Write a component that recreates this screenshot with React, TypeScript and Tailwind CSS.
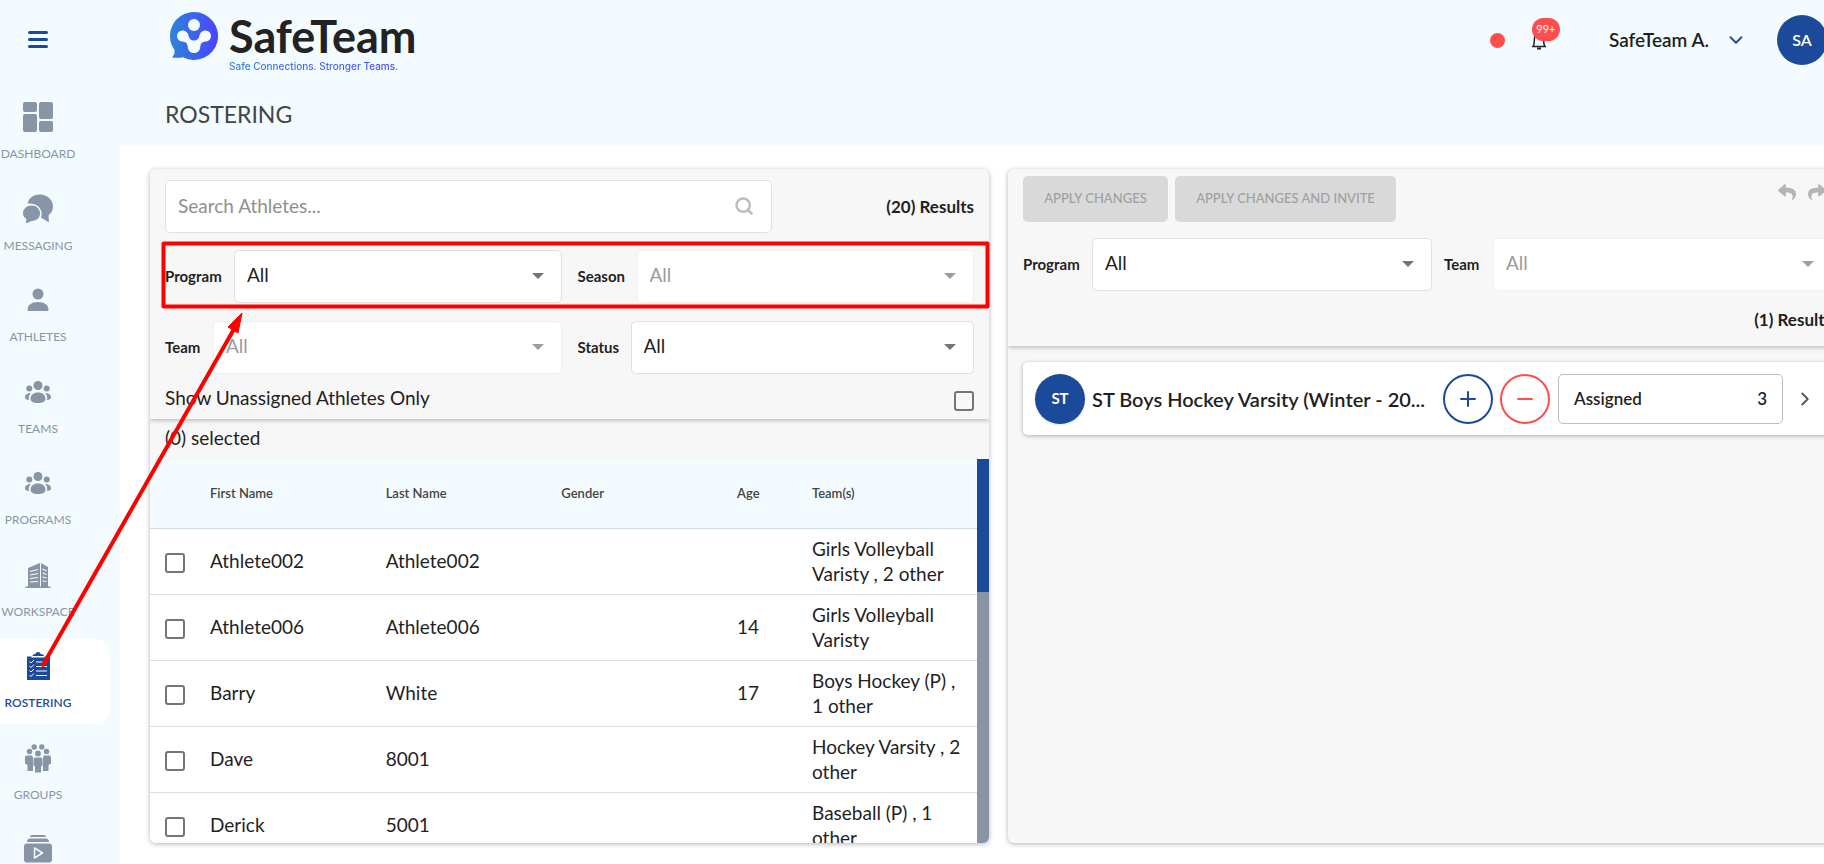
import { useId } from "react";
import type { ReactNode } from "react";
import { FaReply, FaShare } from "react-icons/fa";
import { ChevronDown, ChevronRight, Minus, Plus, Search } from "lucide-react";

type NavItem = {
  label?: string;
  icon: ReactNode;
  active?: boolean;
};

const DashboardIcon = () => (
  <svg className="h-[30px] w-[30px]" viewBox="0 0 30 30" fill="currentColor">
    <rect x="0" y="0" width="14" height="10" rx="2" />
    <rect x="0" y="12" width="14" height="18" rx="2" />
    <rect x="16" y="0" width="14" height="17" rx="2" />
    <rect x="16" y="19" width="14" height="11" rx="2" />
  </svg>
);

const MessagingIcon = () => (
  <svg className="h-[30px] w-[30px]" viewBox="0 0 30 30" fill="currentColor">
    <path d="M4.500 9.500C6 3.500 11 .5 17 .5c7 0 13 5 13 12 0 4-2 7-4.500 9 0 2 .2 3.500 .5 5.500 0 .8-.5 1.200-1.200 .8L18 23.500c2-5-.5-11-6-13-2.500-1-5-1.200-7.500-1z" />
    <path d="M8.500 11.500c5 0 8.500 3.300 8.500 8 0 4.600-3.800 7.500-8.500 7.500L4 29c-.8 .4-1.200 0-1-.8l.4-3.200C1.200 23.500 0 21.500 0 19.500c0-4.700 3.800-8 8.500-8z" />
  </svg>
);

const AthleteIcon = () => (
  <svg className="h-[30px] w-[30px]" viewBox="0 0 30 30" fill="currentColor">
    <circle cx="15" cy="9" r="5.5" />
    <path d="M4.500 25c0-5 4-8 10.500-8s10.500 3 10.500 8c0 .8-.5 1-1 1H5.500c-.6 0-1-.3-1-1z" />
  </svg>
);

const TeamIcon = () => (
  <svg className="h-[30px] w-[30px]" viewBox="0 0 30 30" fill="currentColor">
    <circle cx="15" cy="8.500" r="4.500" />
    <circle cx="6.300" cy="11.500" r="3" />
    <circle cx="23.700" cy="11.500" r="3" />
    <path d="M7.500 22c0-4 3-6.500 7.500-6.500s7.500 2.500 7.500 6.500c0 2.500-3 4-7.500 4s-7.500-1.500-7.500-4z" />
    <path d="M7.800 16c-1.800 2-2.500 4-1.800 7-2.500 0-4-1-4-2.500 0-3 2.300-4.500 5.800-4.500zM22.200 16c1.800 2 2.500 4 1.800 7 2.500 0 4-1 4-2.500 0-3-2.300-4.500-5.800-4.500z" />
  </svg>
);

const WorkspaceIcon = () => (
  <svg className="h-[30px] w-[30px]" viewBox="0 0 30 30" fill="currentColor">
    <path d="M5 8l12-5v24H5zM18 3l7 4v20h-7zM2.500 26.500h25V28h-25z" />
    <path
      d="M7 11.500l8-2M7 15l8-1.500M7 18.500l8-1M7 22l8-.5M19.500 9l4 2M19.500 13l4 1.500M19.500 17l4 1M19.500 21l4 .5"
      stroke="#f3fbff"
      strokeWidth="1.200"
    />
  </svg>
);

const RosterIcon = () => (
  <svg className="h-[30px] w-[30px]" viewBox="0 0 30 30" fill="currentColor">
    <path d="M4 5.500h4.500v1h13v-1H27V29H4z" />
    <path d="M9.500 5c0-1.300 1-1.800 3-2C12.500 1.800 13.500 1 15 1s2.500 .8 2.500 2c2 .2 3.500 .7 3.500 2z" />
    <path
      d="M6.500 10.500l1.500 1.500 3-3M6.500 15l1.500 1.500 3-3M6.500 19.500l1.500 1.500 3-3M6.500 24l1.500 1.500 3-3M13 11h11M13 15.500h11M13 20h11M13 24.500h11"
      stroke="#fff"
      fill="none"
    />
  </svg>
);

const GroupIcon = () => (
  <svg className="h-[30px] w-[30px]" viewBox="0 0 30 30" fill="currentColor">
    <circle cx="11.200" cy="4" r="2.700" />
    <circle cx="18.800" cy="4" r="2.700" />
    <circle cx="6.500" cy="8.500" r="2.700" />
    <circle cx="23.500" cy="8.500" r="2.700" />
    <circle cx="15" cy="10.500" r="2.900" />
    <path d="M4 12.500h5l1 2V28H4.500v-6L2 20.500v-5c0-2 .5-3 2-3zM26 12.500h-5l-1 2V28h5.500v-6l2.500-1.500v-5c0-2-.5-3-2-3z" />
    <path d="M12.500 14.500h5c1.500 0 2 1 2 2.500v5.500L18 23.500v6h-6v-6l-1.500-1V17c0-1.500 .5-2.500 2-2.500z" />
  </svg>
);

const LibraryIcon = () => (
  <svg className="h-[30px] w-[30px]" viewBox="0 0 30 30" fill="currentColor">
    <path d="M7 3c0-1.300 1-2 2-2h12c1 0 2 .7 2 2zM4 8c0-2 1-3.500 3-3.500h16c2 0 3 1.500 3 3.500z" />
    <rect x="1" y="9.500" width="28" height="19" rx="3" />
    <path d="M11.500 14v10l8-5z" fill="none" stroke="#f3fbff" strokeWidth="1.500" strokeLinejoin="round" />
  </svg>
);

const navItems: NavItem[] = [
  { label: "DASHBOARD", icon: <DashboardIcon /> },
  { label: "MESSAGING", icon: <MessagingIcon /> },
  { label: "ATHLETES", icon: <AthleteIcon /> },
  { label: "TEAMS", icon: <TeamIcon /> },
  { label: "PROGRAMS", icon: <TeamIcon /> },
  { label: "WORKSPACE", icon: <WorkspaceIcon /> },
  { label: "ROSTERING", icon: <RosterIcon />, active: true },
  { label: "GROUPS", icon: <GroupIcon /> },
  { icon: <LibraryIcon /> },
];

const athletes = [
  { first: "Athlete002", last: "Athlete002", age: "", teams: "Girls Volleyball Varisty , 2 other" },
  { first: "Athlete006", last: "Athlete006", age: "14", teams: "Girls Volleyball Varisty" },
  { first: "Barry", last: "White", age: "17", teams: "Boys Hockey (P) , 1 other" },
  { first: "Dave", last: "8001", age: "", teams: "Hockey Varsity , 2 other" },
  { first: "Derick", last: "5001", age: "", teams: "Baseball (P) , 1 other" },
];

const checkboxClass =
  "block h-5 w-5 shrink-0 appearance-none rounded-[3px] border-2 border-[#757575] bg-transparent checked:bg-[#1b4a9a]";

type SelectFieldProps = {
  label: string;
  labelClass: string;
  disabled?: boolean;
};

const SelectField = ({ label, labelClass, disabled }: SelectFieldProps) => {
  const id = useId();

  return (
    <div className="flex min-w-0 flex-1 items-center">
      <label htmlFor={id} className={`shrink-0 text-[15px] font-bold ${labelClass}`}>
        {label}
      </label>
      <div className="relative min-w-0 flex-1">
        <select
          id={id}
          disabled={disabled}
          className="block h-[53px] w-full appearance-none rounded-[5px] border border-[#e0e0e0] bg-white px-3 pb-0.5 text-[19px] disabled:border-[#f0f0f0] disabled:text-[#9b9b9b] disabled:opacity-100"
        >
          <option>All</option>
        </select>
        <svg
          className={`pointer-events-none absolute top-[23px] right-[18px] h-1.5 w-3 ${disabled ? "text-[#9e9e9e]" : "text-[#757575]"}`}
          viewBox="0 0 12 6"
          fill="currentColor"
        >
          <path d="M0 0h12L6 6z" />
        </svg>
      </div>
    </div>
  );
};

const Logo = () => (
  <div className="flex gap-[11px]">
    <svg className="mt-3 h-12 w-12" viewBox="0 0 48 48">
      <defs>
        <linearGradient id="logo-mark" x1="0" x2="1">
          <stop offset="0.1" stopColor="#2f7fdb" />
          <stop offset="1" stopColor="#4a44ff" />
        </linearGradient>
      </defs>
      <path
        fill="url(#logo-mark)"
        d="M24 0a24 24 0 1 1-11 45.300C9.500 46 6 46 2 45.500c2-2 3-5 2.500-7.500A24 24 0 0 1 24 0z"
      />
      <circle cx="24" cy="13" r="6" fill="#f3fbff" />
      <path
        fill="#f3fbff"
        d="M12.500 18.500c3.500 0 5.500 2.500 6 5 .5 3.500 2.500 5 5.500 5s5-1.500 5.500-5c.5-2.500 2.500-5 6-5a5.500 5.500 0 0 1 0 11c-3.500 .3-5 2-5.200 5-.3 4-2.300 6.500-6.300 6.500s-6-2.500-6.300-6.500c-.2-3-1.700-4.700-5.200-5a5.500 5.500 0 0 1 0-11z"
      />
    </svg>
    <div className="pt-3">
      <p className="text-[45px] leading-[48px] font-bold text-[#222]">SafeTeam</p>
      <p className="w-fit bg-gradient-to-r from-[#2f7fdb] to-[#4a44ff] bg-clip-text font-[Inter] text-[10px] leading-3 font-medium text-transparent">
        Safe Connections. Stronger Teams.
      </p>
    </div>
  </div>
);

const Header = () => (
  <header className="flex h-[146px] flex-col">
    <div className="flex h-20 items-start justify-between pl-[50px]">
      <Logo />
      <div className="-mr-[3px] flex h-20 shrink-0 items-center">
        <span className="mr-[26px] h-[15px] w-[15px] rounded-full bg-[#ff4d4d]" />
        <button type="button" aria-label="Notifications" className="relative mr-[62px]">
          <svg className="h-5 w-4" viewBox="0 0 16 20" fill="none" stroke="#222" strokeWidth="1.500">
            <path d="M1 16.500h14M2.500 16c1-3 .8-5 1-8C3.700 5 5.300 3 8 3s4.300 2 4.500 5c.2 3 0 5 1 8" />
            <path d="M6 18.500h4" strokeWidth="2" />
          </svg>
          <span className="absolute -top-3 left-px flex h-[23px] w-7 items-center justify-center rounded-full bg-[#ff4d4d] text-[11px] text-white">
            99+
          </span>
        </button>
        <button type="button" className="mr-[30px] flex items-center gap-4 text-[19px] font-semibold">
          SafeTeam A.
          <ChevronDown className="h-[22px] w-[22px] text-[#1b4a9a]" />
        </button>
        <span className="flex h-[50px] w-[50px] items-center justify-center rounded-full bg-[#1b4a9a] font-semibold text-white">
          SA
        </span>
      </div>
    </div>
    <h1 className="pt-[18px] pl-[45px] text-[23px] leading-8 text-[#444]">ROSTERING</h1>
  </header>
);

const Sidebar = () => (
  <aside className="w-[120px] shrink-0 overflow-hidden">
    <div className="flex h-[90px] pt-[30px] pl-7">
      <button type="button" aria-label="Toggle menu" className="h-5 w-5 text-[#1b4a9a]">
        <svg viewBox="0 0 20 20" fill="none" stroke="currentColor" strokeWidth="3" strokeLinecap="round">
          <path d="M1.500 2.500h17M1.500 9.500h17M1.500 16.500h17" />
        </svg>
      </button>
    </div>
    <nav>
      <ul className="flex h-[817px] flex-col justify-between">
        {navItems.map((item) => (
          <li key={item.label ?? "library"} className="w-[110px]">
            <a
              href="#"
              className={`flex h-[85px] flex-col items-center rounded-r-[14px] pt-3 pr-[34px] text-xs ${
                item.active ? "bg-white font-semibold text-[#1b4a9a]" : "text-[#8895a7]"
              }`}
            >
              {item.icon}
              {item.label && <span className="mt-3 leading-5 whitespace-nowrap">{item.label}</span>}
            </a>
          </li>
        ))}
      </ul>
    </nav>
  </aside>
);

const AthletePanel = () => (
  <section className="flex min-h-0 flex-col overflow-hidden rounded-md bg-[#f7f7f7] shadow-[0_1px_5px_rgba(0,0,0,0.3)]">
    <div className="shrink-0 px-[15px] pt-[11px] pb-2 shadow-[0_1px_5px_rgba(0,0,0,0.3)]">
      <div className="flex items-center justify-between">
        <div className="relative w-3/4">
          <input
            type="text"
            aria-label="Search athletes"
            placeholder="Search Athletes..."
            className="block h-[53px] w-full rounded-[5px] border border-[#e0e0e0] bg-white pr-12 pb-0.5 pl-3 text-[19px] placeholder:text-[#8f8f8f]"
          />
          <Search className="absolute top-4 right-[18px] h-5 w-5 text-[#bdbdbd]" strokeWidth={3} />
        </div>
        <p className="text-[17px] font-bold">(20) Results</p>
      </div>
      <div className="mt-[17px] grid grid-cols-2 gap-x-4 gap-y-[18px]">
        <SelectField label="Program" labelClass="w-[69px]" />
        <SelectField label="Season" labelClass="w-[59px]" disabled />
        <SelectField label="Team" labelClass="w-12" disabled />
        <SelectField label="Status" labelClass="w-[53px]" />
      </div>
      <div className="mt-4 flex h-[21px] items-center justify-between">
        <label htmlFor="unassigned-only" className="pb-1 text-[19px]">
          Show Unassigned Athletes Only
        </label>
        <input id="unassigned-only" type="checkbox" className={checkboxClass} />
      </div>
    </div>
    <p className="flex h-10 shrink-0 items-center px-[15px] pb-0.5 text-[19px]">(0) selected</p>
    <div className="flex min-h-0 flex-1">
      <div className="min-w-0 flex-1 overflow-hidden bg-white">
        <table className="w-full table-fixed border-collapse text-left">
          <colgroup>
            <col className="w-[60px]" />
            <col />
            <col />
            <col />
            <col className="w-[75px]" />
            <col className="w-[165px]" />
          </colgroup>
          <thead>
            <tr className="h-[69px] border-b border-[#cfdcdf] bg-[#f3fbff] text-[13px] text-[#444]">
              <th />
              <th className="font-semibold">First Name</th>
              <th className="font-semibold">Last Name</th>
              <th className="font-semibold">Gender</th>
              <th className="font-semibold">Age</th>
              <th className="font-semibold">Team(s)</th>
            </tr>
          </thead>
          <tbody>
            {athletes.map((athlete) => (
              <tr key={athlete.first} className="h-[66px] border-b border-[#dadfe1] text-[19px] leading-[25px]">
                <td className="pt-1 pl-[15px]">
                  <input type="checkbox" aria-label={`Select ${athlete.first}`} className={checkboxClass} />
                </td>
                <td className="pb-0.5">{athlete.first}</td>
                <td className="pb-0.5">{athlete.last}</td>
                <td />
                <td className="pb-0.5">{athlete.age}</td>
                <td className="pr-3">{athlete.teams}</td>
              </tr>
            ))}
          </tbody>
        </table>
      </div>
      <div className="w-3 shrink-0 bg-[#8895a7]">
        <div className="h-[133px] bg-[#1b4a9a]" />
      </div>
    </div>
  </section>
);

const TeamPanel = () => (
  <section className="flex min-h-0 flex-col overflow-hidden rounded-md bg-[#f7f7f7] shadow-[0_1px_5px_rgba(0,0,0,0.3)]">
    <div className="shrink-0 px-[15px] pt-[7px] pb-3.5 shadow-[0_1px_5px_rgba(0,0,0,0.3)]">
      <div className="flex items-start justify-between">
        <div className="flex gap-[7px] text-[13px] font-medium text-[#a0a0a0]">
          <button type="button" disabled className="h-[46px] w-[145px] rounded-[5px] bg-[#d9d9d9]">
            APPLY CHANGES
          </button>
          <button type="button" disabled className="h-[46px] w-[221px] rounded-[5px] bg-[#d9d9d9]">
            APPLY CHANGES AND INVITE
          </button>
        </div>
        <div className="flex gap-3 pt-[7px] pr-1.5 text-[#b5b5b5]">
          <button type="button" aria-label="Undo">
            <FaReply className="h-[18px] w-[18px]" />
          </button>
          <button type="button" aria-label="Redo">
            <FaShare className="h-[18px] w-[18px]" />
          </button>
        </div>
      </div>
      <div className="mt-4 flex gap-3">
        <div className="flex min-w-0 flex-[409]">
          <SelectField label="Program" labelClass="w-[69px]" />
        </div>
        <div className="flex min-w-0 flex-[388]">
          <SelectField label="Team" labelClass="w-[49px]" disabled />
        </div>
      </div>
      <p className="mt-[17px] text-right text-[17px] leading-6 font-bold">(1) Results</p>
    </div>
    <div className="px-[15px] pt-4">
      <article className="flex h-[73px] items-center rounded-[5px] bg-white pr-4 pl-3 shadow-[0_1px_4px_rgba(0,0,0,0.3)]">
        <span className="flex h-[50px] w-[50px] shrink-0 items-center justify-center rounded-full bg-[#1b4a9a] text-[15px] font-bold text-white shadow">
          ST
        </span>
        <h2 className="ml-[7px] min-w-0 flex-1 text-xl font-semibold whitespace-nowrap">
          ST Boys Hockey Varsity (Winter - 20...
        </h2>
        <button
          type="button"
          aria-label="Assign"
          className="ml-2 flex h-[50px] w-[50px] shrink-0 items-center justify-center rounded-full border-2 border-[#1b4a9a] text-[#1b4a9a]"
        >
          <Plus className="h-6 w-6" />
        </button>
        <button
          type="button"
          aria-label="Unassign"
          className="ml-[7px] flex h-[50px] w-[50px] shrink-0 items-center justify-center rounded-full border-2 border-[#ff4d4d] text-[#ff4d4d]"
        >
          <Minus className="h-6 w-6" />
        </button>
        <button
          type="button"
          className="ml-2 flex h-[50px] w-[225px] shrink-0 items-center justify-between rounded-[5px] border border-[#bdbdbd] px-[15px] text-[17px] font-semibold"
        >
          <span>Assigned</span>
          <span>3</span>
        </button>
        <button type="button" aria-label="Open team" className="ml-[11px] shrink-0 text-[#555]">
          <ChevronRight className="h-[22px] w-[22px]" />
        </button>
      </article>
    </div>
  </section>
);

const Annotation = () => (
  <svg className="pointer-events-none absolute top-0 left-0 h-[700px] w-[1000px]" viewBox="0 0 1000 700" fill="none">
    <rect x="163.500" y="243.500" width="824" height="63" stroke="#f00" strokeWidth="4" strokeLinejoin="round" />
    <path d="M43 665L234 329" stroke="#f00" strokeWidth="4" strokeLinecap="round" />
    <path d="M242 313l-4 20-10-6z" fill="#f00" stroke="#f00" />
  </svg>
);

const App = () => {
  return (
    <div className="relative flex h-screen overflow-hidden bg-[#f3fbff] font-[Lato,'Open_Sans',sans-serif] text-[#1f1f1f]">
      <Sidebar />
      <div className="flex min-w-0 flex-1 flex-col">
        <Header />
        {/* content runs past the right edge of the window */}
        <main className="-mr-[53px] grid min-h-0 flex-1 grid-cols-2 grid-rows-1 gap-[19px] bg-white px-[30px] pt-[23px] pb-[21px]">
          <AthletePanel />
          <TeamPanel />
        </main>
      </div>
      <Annotation />
    </div>
  );
};

export default App;
